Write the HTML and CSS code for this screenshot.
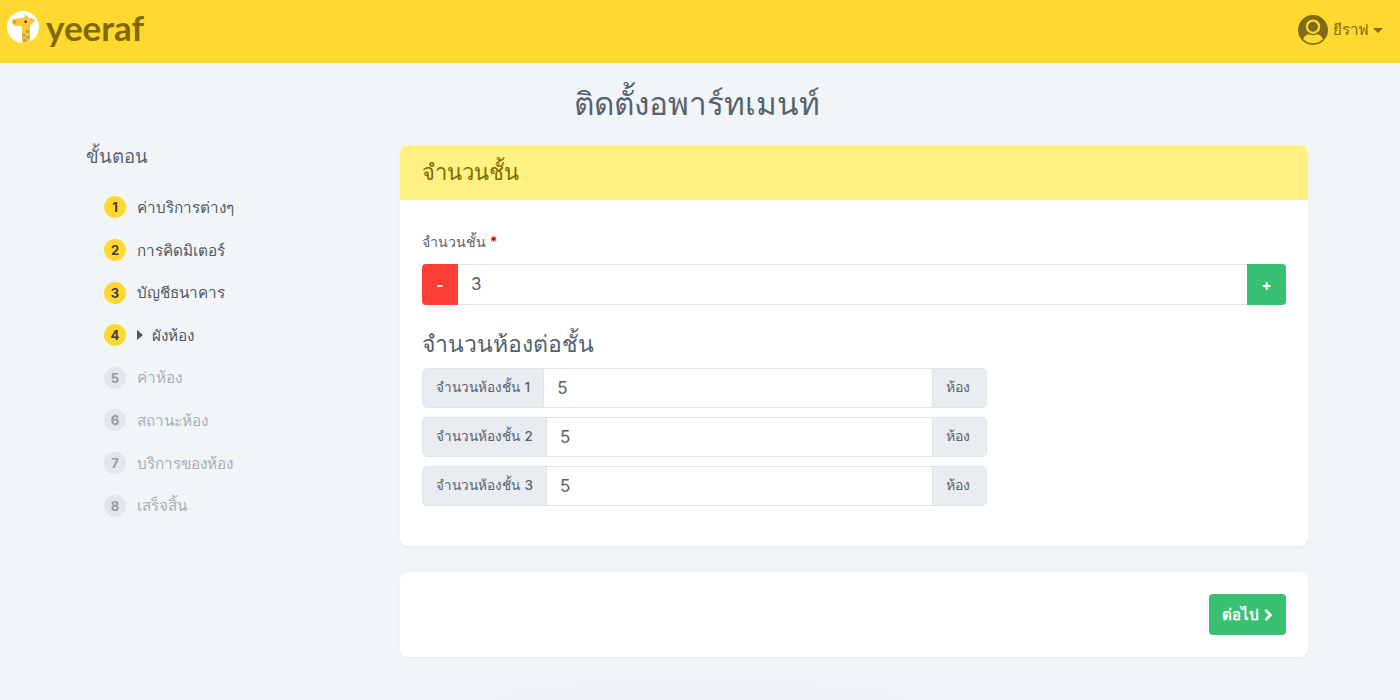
FILE: index.html
```html
<!DOCTYPE html>
<html lang="th">
<head>
<meta charset="utf-8">
<title>ติดตั้งอพาร์ทเมนท์</title>
<link rel="stylesheet" href="styles.css">
</head>
<body>
<header class="navbar">
  <a class="brand">
    <svg class="logo" viewBox="0 0 32 32" aria-hidden="true">
      <circle cx="16" cy="16" r="16" fill="#fff"/>
      <path d="M15 32V15.500L7 14.500C4.500 14 4 10 6 8.500C8 7 12 7.500 15 7L17.500 6.500L17.500 3L19.500 5L20.500 3.500L21 6.500L23 7C24.500 7 27 7.500 27.500 9C26.500 12 24.500 13.500 23 14V30A16 16 0 0 1 15 32Z" fill="#f9c83c"/>
      <circle cx="18.700" cy="10.800" r="1.300" fill="#333"/>
      <circle cx="7.500" cy="11" r="1.700" fill="#cf9f3c"/>
      <circle cx="20.300" cy="20.300" r="1.700" fill="#cf9f3c"/>
      <circle cx="16.800" cy="24.300" r="1.700" fill="#cf9f3c"/>
      <circle cx="21" cy="26.300" r="1.700" fill="#cf9f3c"/>
      <circle cx="17.600" cy="29.300" r="1.700" fill="#cf9f3c"/>
    </svg>
    <span class="brand-name">yeeraf</span>
  </a>
  <div class="user">
    <svg class="avatar" viewBox="0 0 32 32" aria-hidden="true">
      <circle cx="16" cy="16" r="16" fill="#7f6a17"/>
      <circle cx="16" cy="12.500" r="6.500" fill="none" stroke="#ffd92f" stroke-width="2.400"/>
      <path d="M5.500 25.500C8 21 11 20.300 12.500 20.800C15 21.800 17 21.800 19.500 20.800C21 20.300 24 21 26.500 25.500C24 28.500 20 30 16 30C12 30 8 28.500 5.500 25.500Z" fill="#ffd92f"/>
    </svg>
    <span class="user-name">ยีราฟ</span>
    <span class="caret"></span>
  </div>
</header>

<h1 class="page-title">ติดตั้งอพาร์ทเมนท์</h1>

<main class="layout">
  <aside class="steps">
    <h2 class="steps-title">ขั้นตอน</h2>
    <ol class="step-list">
      <li class="step"><span class="num">1</span><span>ค่าบริการต่างๆ</span></li>
      <li class="step"><span class="num">2</span><span>การคิดมิเตอร์</span></li>
      <li class="step"><span class="num">3</span><span>บัญชีธนาคาร</span></li>
      <li class="step"><span class="num">4</span><span class="arrow"></span><span>ผังห้อง</span></li>
      <li class="step off"><span class="num">5</span><span>ค่าห้อง</span></li>
      <li class="step off"><span class="num">6</span><span>สถานะห้อง</span></li>
      <li class="step off"><span class="num">7</span><span>บริการของห้อง</span></li>
      <li class="step off"><span class="num">8</span><span>เสร็จสิ้น</span></li>
    </ol>
  </aside>

  <section class="content">
    <div class="card">
      <div class="card-head">จำนวนชั้น</div>
      <div class="card-body">
        <label class="field-label">จำนวนชั้น <span class="req">*</span></label>
        <div class="stepper">
          <button class="btn minus">-</button>
          <div class="stepper-value">3</div>
          <button class="btn plus">+</button>
        </div>
        <h3 class="sub-title">จำนวนห้องต่อชั้น</h3>
        <div class="room-groups">
          <div class="room-group"><span class="addon">จำนวนห้องชั้น 1</span><span class="room-value">5</span><span class="addon end">ห้อง</span></div>
          <div class="room-group"><span class="addon">จำนวนห้องชั้น 2</span><span class="room-value">5</span><span class="addon end">ห้อง</span></div>
          <div class="room-group"><span class="addon">จำนวนห้องชั้น 3</span><span class="room-value">5</span><span class="addon end">ห้อง</span></div>
        </div>
      </div>
    </div>
    <div class="card footer-card">
      <button class="btn next">ต่อไป
        <svg class="chev" viewBox="0 0 10 14" aria-hidden="true"><path d="M2.500 2L7.500 7L2.500 12" fill="none" stroke="#fff" stroke-width="2.600"/></svg>
      </button>
    </div>
  </section>
</main>
</body>
</html>
```

FILE: styles.css
```css
* { box-sizing: border-box; }
html, body { height: 100%; }
body {
  margin: 0;
  height: 700px;
  overflow: hidden;
  background: radial-gradient(ellipse 320px 30px at 700px 700px, #eef2f5, rgba(238,242,245,0)), #f1f5f8;
  color: #566270;
  font-family: "Inter", "Noto Sans", "Open Sans", sans-serif;
}
.navbar {
  height: 63px;
  background: #ffd92f;
  display: flex;
  align-items: center;
  justify-content: space-between;
  padding: 0 17px 3px 7px;
}
.brand { display: flex; align-items: center; gap: 7px; }
.logo { width: 32px; height: 32px; margin-bottom: 6px; }
.brand-name {
  font-family: "Lato", sans-serif;
  font-weight: 700;
  font-size: 35px;
  line-height: 40px;
  margin-bottom: 6px;
  color: #7f6a00;
}
.user { display: flex; align-items: center; color: #7f6a17; font-size: 15px; }
.avatar { width: 30px; height: 30px; }
.user-name { margin-left: 5px; }
.caret {
  margin-left: 4px;
  border-top: 5px solid #7f6a17;
  border-left: 5px solid transparent;
  border-right: 5px solid transparent;
}
.page-title {
  margin: 18px 0 0;
  height: 64px;
  padding-right: 6px;
  line-height: 46px;
  text-align: center;
  font-size: 31.500px;
  font-weight: 400;
  color: #566270;
}
.layout { display: flex; padding-left: 86px; }
.steps { width: 314px; flex: none; }
.steps-title {
  margin: 0;
  height: 24px;
  font-size: 18.500px;
  font-weight: 400;
  line-height: 22px;
  color: #566270;
}
.step-list { list-style: none; margin: 17.200px 0 0; padding: 0 0 0 18px; }
.step {
  display: flex;
  align-items: center;
  height: 42.600px;
  font-size: 15.300px;
  color: #4f5a66;
  font-weight: 500;
}
.num {
  width: 22px;
  height: 22px;
  margin-right: 11px;
  flex: none;
  border-radius: 50%;
  background: #ffd92f;
  color: #3d3d3d;
  font-size: 13px;
  font-weight: 700;
  text-align: center;
  line-height: 22px;
}
.arrow {
  width: 0;
  height: 0;
  margin-right: 9px;
  border-left: 6px solid #4a5568;
  border-top: 5px solid transparent;
  border-bottom: 5px solid transparent;
}
.step.off { color: #a9afb7; font-weight: 400; }
.step.off .num { background: #e3e6ea; color: #9a9a9a; }
.content { width: 908px; flex: none; }
.card {
  background: #fff;
  border-radius: 8px;
  box-shadow: 0 1px 3px rgba(0,0,0,.05);
  overflow: hidden;
}
.card-head {
  height: 55px;
  padding: 0 22px;
  background: #fff282;
  color: #7f6a00;
  font-size: 22px;
  line-height: 55px;
}
.card-body { padding: 22px 22px 40px; }
.field-label {
  display: block;
  height: 42px;
  line-height: 40px;
  font-size: 14.200px;
  font-weight: 500;
  color: #566270;
}
.req { color: #e00000; font-weight: 700; }
.stepper { display: flex; height: 41px; }
.btn {
  border: 0;
  padding: 0;
  color: #fff;
  font: inherit;
  font-weight: 700;
  font-size: 15px;
}
.minus { width: 36px; background: #ff3f36; border-radius: 4px 0 0 4px; }
.plus { width: 39px; background: #38c172; border-radius: 0 4px 4px 0; }
.stepper-value {
  flex: 1;
  border: 1px solid #dde4ec;
  border-width: 1px 0;
  padding-left: 13px;
  font-size: 17px;
  line-height: 38px;
}
.sub-title {
  margin: 20px 0 0;
  height: 43px;
  line-height: 38px;
  font-size: 23px;
  font-weight: 400;
  color: #566270;
}
.room-groups { display: flex; flex-direction: column; gap: 9px; }
.room-group {
  display: flex;
  width: 565px;
  height: 40px;
  border: 1px solid #dde4ec;
  border-radius: 5px;
  overflow: hidden;
}
.addon {
  padding: 0 13px;
  background: #e9ecf1;
  border-right: 1px solid #dde4ec;
  font-size: 13.500px;
  word-spacing: 1px;
  font-weight: 500;
  line-height: 36px;
  white-space: nowrap;
}
.addon.end { border-right: 0; border-left: 1px solid #dde4ec; width: 54px; font-size: 14px; }
.room-value { flex: 1; padding-left: 13px; font-size: 17px; line-height: 38px; }
.footer-card {
  margin-top: 26px;
  height: 85px;
  display: flex;
  align-items: center;
  justify-content: flex-end;
  padding: 0 22px;
}
.next {
  width: 77px;
  height: 41px;
  background: #38c172;
  border-radius: 4px;
  display: flex;
  align-items: center;
  justify-content: center;
  gap: 4px;
  font-size: 15px;
}
.chev { width: 10px; height: 14px; }
```
